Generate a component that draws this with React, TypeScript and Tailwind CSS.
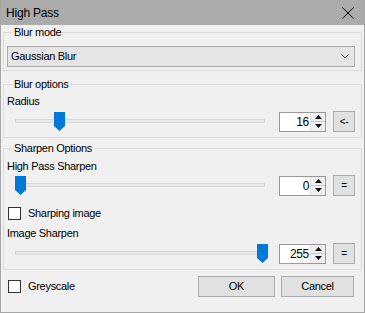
import React from 'react';

const font = { fontFamily: '"Liberation Sans", Arial, sans-serif' };

function Thumb() {
  return (
    <svg width="11" height="19" viewBox="0 0 11 19">
      <path d="M0 0 H11 V14 L5.5 19 L0 14 Z" fill="#0078d7" />
    </svg>
  );
}

function Slider({ value, max }: { value: number; max: number }) {
  const left = 8 + (value / max) * 242;
  return (
    <div className="relative flex-1 h-[20px] mr-[6px]">
      <div className="absolute left-[8px] right-[8px] top-[7px] h-[4px] bg-[#e7eaea] border border-[#d6d6d6]" />
      <div className="absolute top-0" style={{ left }}>
        <Thumb />
      </div>
    </div>
  );
}

function Spin({ value }: { value: number }) {
  return (
    <div className="flex w-[47px] h-[20px] border border-[#9a9a9a] bg-white">
      <div className="flex-1 text-right pr-[1px] text-[12px] leading-[18px] text-black">{value}</div>
      <div className="flex flex-col w-[15px] bg-[#f0f0f0] border-l border-[#e0e0e0]">
        <div className="flex-1 flex items-center justify-center border-b border-[#c8c8c8]">
          <svg width="7" height="4" viewBox="0 0 7 4"><path d="M3.5 0 L7 4 H0 Z" fill="#111" /></svg>
        </div>
        <div className="flex-1 flex items-center justify-center">
          <svg width="7" height="4" viewBox="0 0 7 4"><path d="M0 0 H7 L3.5 4 Z" fill="#111" /></svg>
        </div>
      </div>
    </div>
  );
}

function SmallBtn({ label }: { label: string }) {
  return (
    <div className="ml-[7px] w-[22px] h-[21px] flex items-center justify-center bg-[#e1e1e1] border border-[#adadad] text-[10px] text-black">
      {label}
    </div>
  );
}

function Row({ value, max, btn }: { value: number; max: number; btn: string }) {
  return (
    <div className="flex items-center">
      <Slider value={value} max={max} />
      <Spin value={value} />
      <SmallBtn label={btn} />
    </div>
  );
}

function Check({ label }: { label: string }) {
  return (
    <div className="flex items-center gap-[7px] h-[15px]">
      <div className="w-[13px] h-[13px] bg-white border border-[#333]" />
      <span className="text-black">{label}</span>
    </div>
  );
}

function Group({ title, children }: { title: string; children: React.ReactNode }) {
  return (
    <fieldset className="border border-[#dcdcdc] px-[3px] pr-[6px]">
      <legend className="ml-[6px] px-[1px] leading-[15px] text-black">{title}</legend>
      {children}
    </fieldset>
  );
}

export default function App() {
  return (
    <div
      className="w-[365px] h-[313px] bg-[#f0f0f0] border-x border-b border-[#a5a5a5] flex flex-col text-[11px] tracking-[-0.3px]"
      style={font}
    >
      <div className="h-[25px] bg-[#ababab] flex items-center justify-between pl-[5px] pr-[10px] shrink-0">
        <span className="text-[12px] tracking-[-0.2px] text-black">High Pass</span>
        <svg width="12" height="12" viewBox="0 0 12 12">
          <path d="M0.5 0.5 L11.5 11.5 M11.5 0.5 L0.5 11.5" stroke="#000" strokeWidth="1" />
        </svg>
      </div>
      <div className="flex flex-col px-[2px]">
        <Group title="Blur mode">
          <div className="mt-[6px] mb-[3px] h-[21px] flex items-center justify-between bg-[#e5e5e5] border border-[#acacac] pl-[3px] pr-[5px]">
            <span className="text-black">Gaussian Blur</span>
            <svg width="8" height="5" viewBox="0 0 8 5">
              <path d="M0.5 0.5 L4 4 L7.5 0.5" stroke="#555" fill="none" />
            </svg>
          </div>
        </Group>
        <div className="mt-[6px]">
          <Group title="Blur options">
            <div className="leading-[15px] mt-[2px] text-black">Radius</div>
            <div className="mt-[2px] mb-[5px]">
              <Row value={16} max={100} btn="<-" />
            </div>
          </Group>
        </div>
        <div className="mt-[3px]">
          <Group title="Sharpen Options">
            <div className="leading-[15px] mt-[3px] text-black">High Pass Sharpen</div>
            <div className="mt-[1px]">
              <Row value={0} max={255} btn="=" />
            </div>
            <div className="mt-[10px] ml-[1px]">
              <Check label="Sharping image" />
            </div>
            <div className="leading-[15px] mt-[5px] text-black">Image Sharpen</div>
            <div className="mt-[2px] mb-[5px]">
              <Row value={255} max={255} btn="=" />
            </div>
          </Group>
        </div>
        <div className="flex items-center justify-between mt-[6px] pl-[5px] pr-[8px]">
          <Check label="Greyscale" />
          <div className="flex gap-[6px]">
            <div className="w-[77px] h-[21px] flex items-center justify-center bg-[#e1e1e1] border border-[#adadad] text-black">OK</div>
            <div className="w-[73px] h-[21px] flex items-center justify-center bg-[#e1e1e1] border border-[#adadad] text-black">Cancel</div>
          </div>
        </div>
      </div>
    </div>
  );
}
